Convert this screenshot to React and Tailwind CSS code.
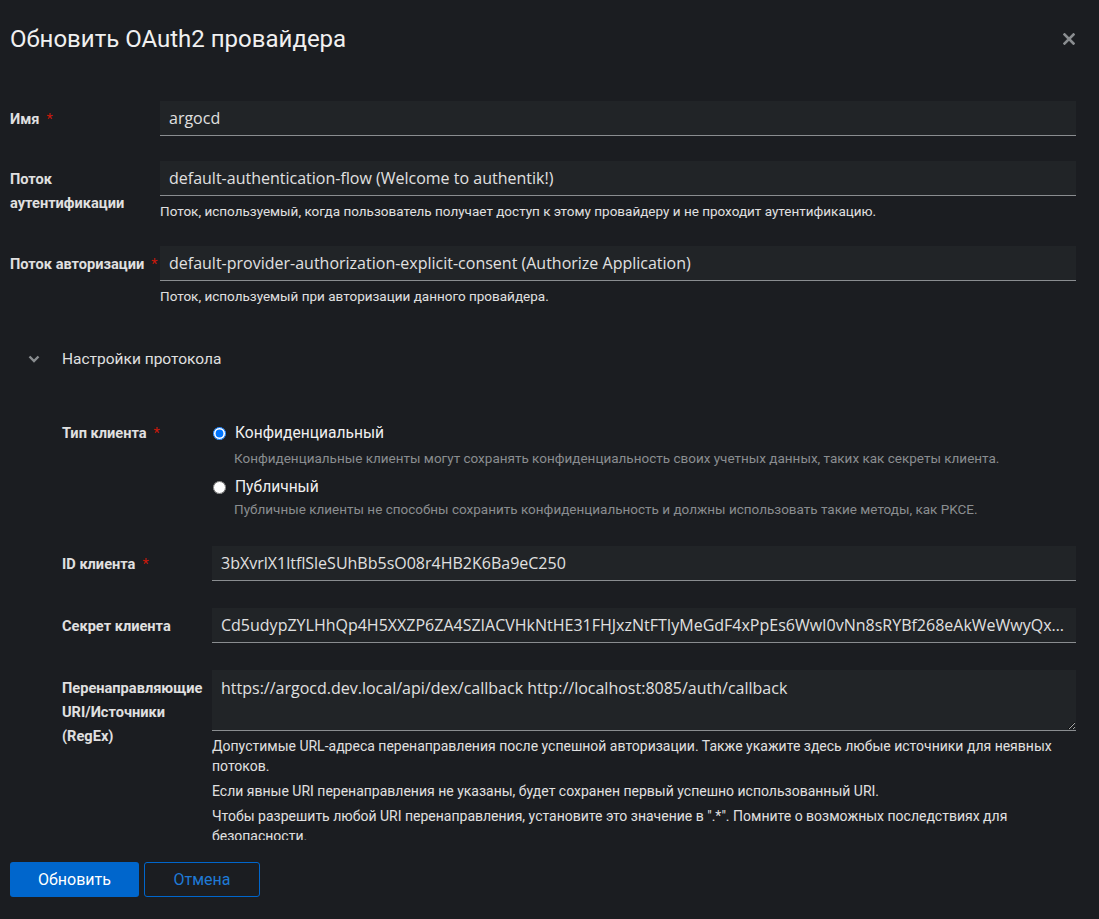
import React from "react";

const font = { fontFamily: "Roboto, 'Noto Sans', sans-serif" };

function Label({ children, required }) {
  return (
    <div className="pt-[6px] text-[14.6px] leading-6 font-bold text-[#e0e0e0]">
      {children}
      {required && <span className="ml-[7px] text-[#c9190b] font-normal">*</span>}
    </div>
  );
}

function Input({ value, truncate }) {
  return (
    <div
      className={
        "h-[35px] bg-[#212427] border-b border-[#8a8d90] px-[9px] flex items-center text-[16px] text-[#e0e0e0] " +
        (truncate ? "overflow-hidden" : "")
      }
      style={{ fontFamily: "'Open Sans', Lato, sans-serif" }}
    >
      <span className={truncate ? "truncate block w-full" : ""}>{value}</span>
    </div>
  );
}

function Helper({ children }) {
  return <div className="text-[13.5px] leading-5 text-[#e0e0e0] pt-[5px]">{children}</div>;
}

export default function App() {
  return (
    <div className="h-[919px] w-full bg-[#1b1d21] flex flex-col text-[#e0e0e0] overflow-hidden" style={font}>
      {/* Header */}
      <div className="pt-6 px-[10px] pr-[24px] flex items-start justify-between h-[78px] shrink-0">
        <h1 className="text-[24px] leading-[30px] text-[#f0f0f0] font-normal">Обновить OAuth2 провайдера</h1>
        <svg width="12" height="12" viewBox="0 0 12 12" className="mt-[9px]">
          <path d="M1.5 1.5 L10.5 10.5 M10.5 1.5 L1.5 10.5" stroke="#8a8d90" strokeWidth="2.6" strokeLinecap="square" />
        </svg>
      </div>

      {/* Body */}
      <div className="flex-1 overflow-hidden pt-[23px] pl-[10px] pr-[23px]">
        <div className="grid grid-cols-[150px_1fr] gap-y-[25px]">
          <Label required>Имя</Label>
          <Input value="argocd" />

          <Label>
            Поток
            <br />
            аутентификации
          </Label>
          <div>
            <Input value="default-authentication-flow (Welcome to authentik!)" />
            <Helper>Поток, используемый, когда пользователь получает доступ к этому провайдеру и не проходит аутентификацию.</Helper>
          </div>

          <Label required>Поток авторизации</Label>
          <div>
            <Input value="default-provider-authorization-explicit-consent (Authorize Application)" />
            <Helper>Поток, используемый при авторизации данного провайдера.</Helper>
          </div>
        </div>

        {/* Expandable section */}
        <div className="mt-[41px] flex items-center h-6">
          <div className="w-[52px] flex justify-center pr-[4px]">
            <svg width="12" height="8" viewBox="0 0 12 8">
              <path d="M1.5 1.5 L6 6 L10.5 1.5" fill="none" stroke="#8a8d90" strokeWidth="2.4" />
            </svg>
          </div>
          <span className="text-[15.5px] leading-6 text-[#e0e0e0]">Настройки протокола</span>
        </div>

        <div className="pl-[52px] mt-[50px] grid grid-cols-[150px_1fr] gap-y-[27px]">
          <div className="text-[14.6px] leading-6 font-bold text-[#e0e0e0]">
            Тип клиента<span className="ml-[7px] text-[#c9190b] font-normal">*</span>
          </div>
          <div className="flex flex-col">
            <label className="flex items-center h-6 pl-[1px]">
              <input type="radio" name="ct" defaultChecked className="m-0 w-[13px] h-[13px]" />
              <span className="ml-[9px] text-[15.6px] leading-6 text-[#f0f0f0]">Конфиденциальный</span>
            </label>
            <div className="pl-[22px] text-[13.5px] leading-5 text-[#8a8d90] mt-[3px]">
              Конфиденциальные клиенты могут сохранять конфиденциальность своих учетных данных, таких как секреты клиента.
            </div>
            <label className="flex items-center h-6 pl-[1px] mt-[7px]">
              <input type="radio" name="ct" className="m-0 w-[13px] h-[13px]" />
              <span className="ml-[9px] text-[15.6px] leading-6 text-[#f0f0f0]">Публичный</span>
            </label>
            <div className="pl-[22px] text-[13.5px] leading-5 text-[#8a8d90]">
              Публичные клиенты не способны сохранить конфиденциальность и должны использовать такие методы, как PKCE.
            </div>
          </div>

          <Label required>ID клиента</Label>
          <Input value="3bXvrlX1ltflSleSUhBb5sO08r4HB2K6Ba9eC250" />

          <Label>Секрет клиента</Label>
          <Input
            truncate
            value="Cd5udypZYLHhQp4H5XXZP6ZA4SZIACVHkNtHE31FHJxzNtFTIyMeGdF4xPpEs6WwI0vNn8sRYBf268eAkWeWwyQx3JTmPqLs9Vn2"
          />

          <Label>
            Перенаправляющие
            <br />
            URI/Источники
            <br />
            (RegEx)
          </Label>
          <div>
            <textarea
              readOnly
              value="https://argocd.dev.local/api/dex/callback http://localhost:8085/auth/callback"
              className="block w-full h-[61px] bg-[#212427] border-0 border-b border-[#8a8d90] px-[9px] pt-[6px] text-[16px] leading-6 text-[#e0e0e0] resize-y outline-none [color-scheme:dark]"
              style={{ fontFamily: "'Open Sans', Lato, sans-serif" }}
            />
            <div className="pt-[5px] text-[14px] leading-5 text-[#e0e0e0] flex flex-col gap-[5px]">
              <div>
                Допустимые URL-адреса перенаправления после успешной авторизации. Также укажите здесь любые источники для неявных потоков.
              </div>
              <div>Если явные URI перенаправления не указаны, будет сохранен первый успешно использованный URI.</div>
              <div>
                Чтобы разрешить любой URI перенаправления, установите это значение в ".*". Помните о возможных последствиях для безопасности.
              </div>
            </div>
          </div>
        </div>
      </div>

      {/* Footer */}
      <div className="h-[79px] shrink-0 pt-[22px] px-[10px] flex items-start gap-[5px]">
        <button className="h-[35px] w-[129px] rounded-[3px] bg-[#0066cc] text-white text-[16px]">Обновить</button>
        <button className="h-[35px] w-[116px] rounded-[3px] border border-[#0066cc] text-[#1f7ad6] text-[16px]">Отмена</button>
      </div>
    </div>
  );
}
